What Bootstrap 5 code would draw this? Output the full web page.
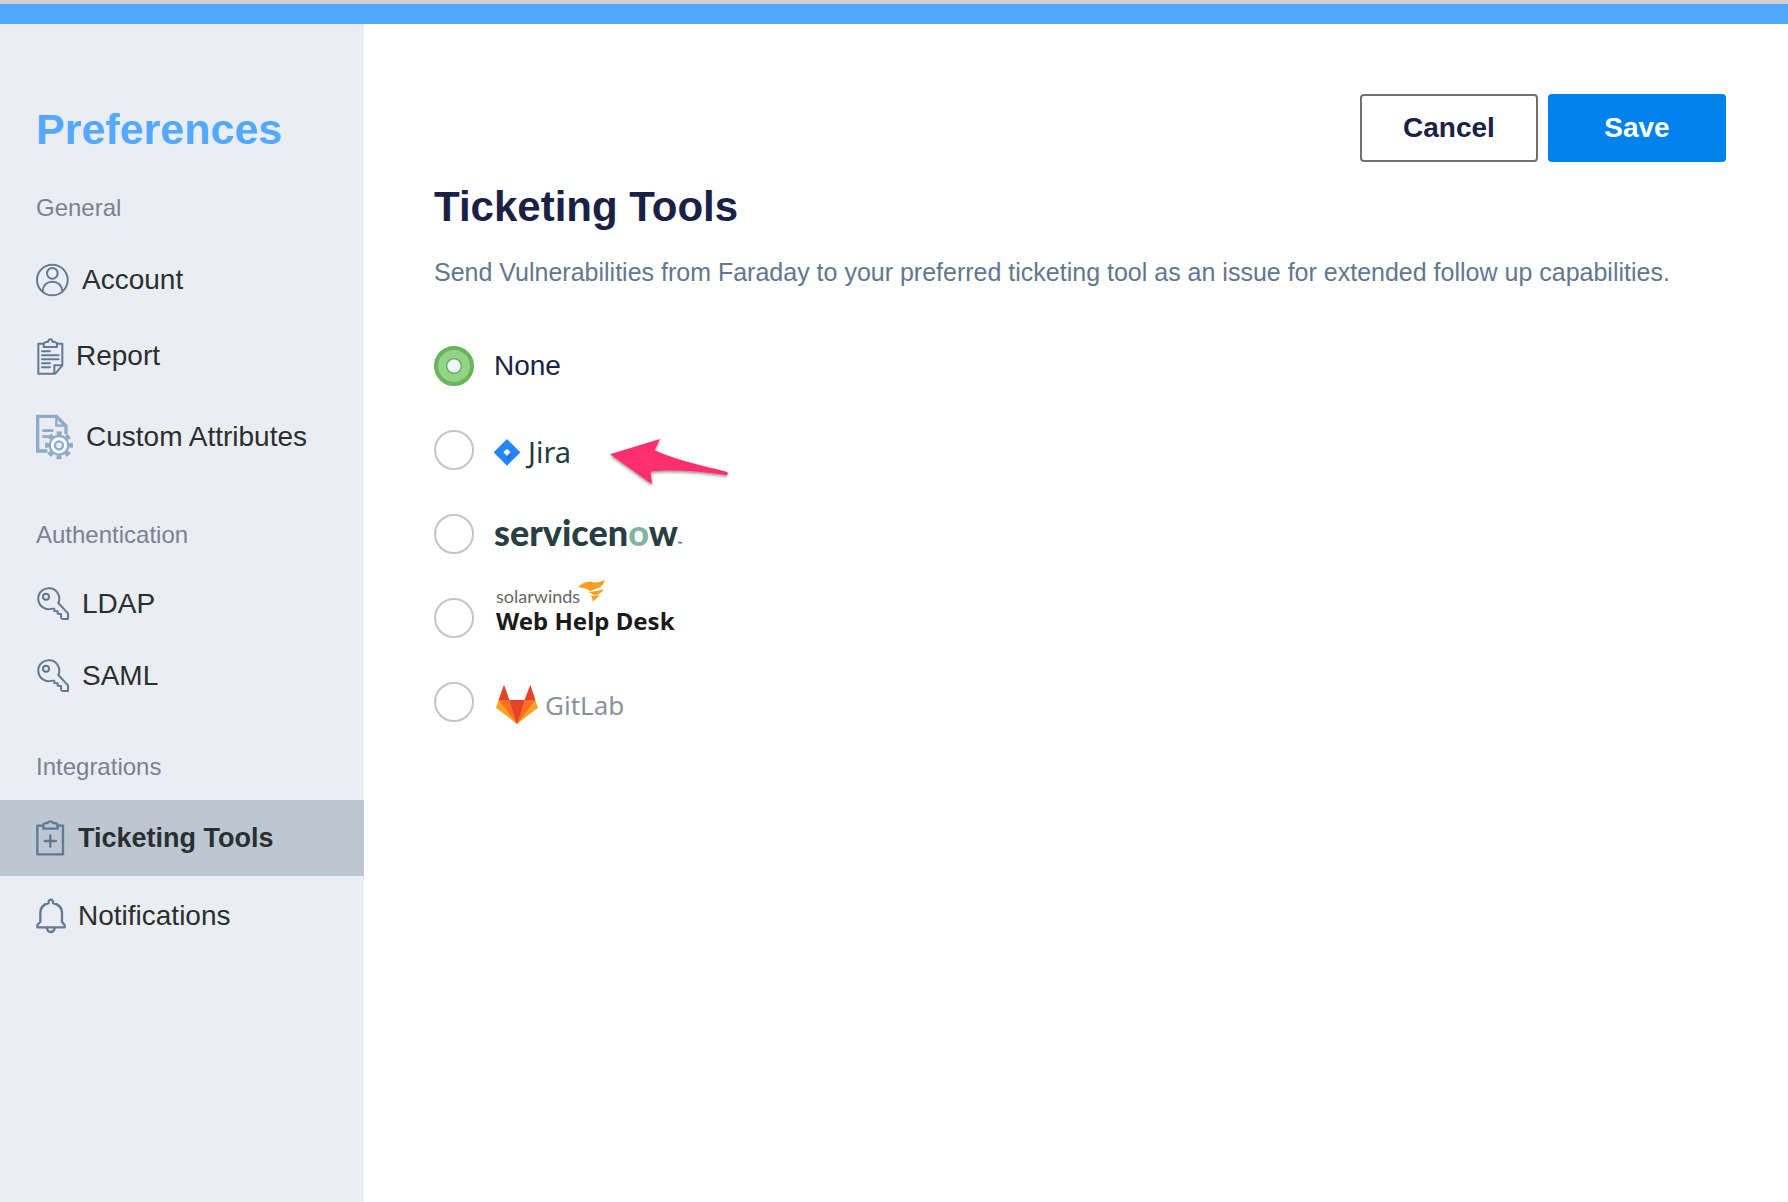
<!DOCTYPE html>
<html lang="en">
<head>
<meta charset="utf-8">
<meta name="viewport" content="width=device-width, initial-scale=1">
<title>Preferences - Ticketing Tools</title>
<link href="https://cdn.jsdelivr.net/npm/bootstrap@5.3.0/dist/css/bootstrap.min.css" rel="stylesheet">
<style>
  body { font-family: "Liberation Sans", Arial, sans-serif; color: #1b2145; background: #fff; }
  .window-edge { height: 4px; background: #d0d0d0; }
  .top-strip { height: 20px; background: #53a8ff; }
  .app-shell { min-height: calc(100vh - 24px); }

  .prefs-side { width: 364px; background: #eaeef3; padding-top: 79px; }
  .prefs-title { font-size: 43px; line-height: 52px; font-weight: 700; color: #53a8ff; padding-left: 36px; margin: 0 0 36px; }
  .side-label { font-size: 24px; line-height: 34px; font-weight: 400; color: #7d7f93; padding-left: 36px; margin: 38px 0 16px; }
  .side-label:first-child { margin: 0 0 17px; }
  .side-link { height: 76px; padding: 0 36px; gap: 12px; font-size: 28px; line-height: 36px; color: #2a2f31; border-radius: 0; white-space: nowrap; }
  .side-link:hover { color: #2a2f31; background: #dde3ea; }
  .side-link.active { background: #bdc7d1; color: #2a2f31; font-weight: 700; font-size: 27px; }
  .side-link svg { flex: none; }
  .row-tall { height: 86px; }
  .row-key { height: 72px; }
  .row-bell { height: 80px; }
  .ico { fill: none; stroke: #647995; stroke-width: 7; stroke-linejoin: round; stroke-linecap: round; }
  .ico-thin { stroke-width: 6; }

  .prefs-main { padding: 70px 62px 40px 70px; min-width: 0; }
  .action-btn { width: 178px; height: 68px; font-size: 28px; font-weight: 700; border-radius: 4px; border-width: 2px; padding: 0; }
  .action-set { gap: 10px; }
  .btn-cancel { border-color: #707070; color: #1b2145; background: #fff; }
  .btn-save, .btn-save:hover { border-color: #0082ee; background: #0082ee; color: #fff; }
  .page-title { font-size: 42px; line-height: 52px; font-weight: 700; margin: 19px 0 21px; }
  .page-note { font-size: 25px; line-height: 36px; color: #63768f; margin: 0 0 34px; }

  .tool-row { height: 84px; gap: 20px; }
  .tool-row .form-check-input { width: 40px; height: 40px; margin: 0; flex: none; border: 2px solid #c4c4c4; background-color: #fff; }
  .tool-row .form-check-input:checked { border: 4px solid #68b65c; background-color: #94d388;
    background-image: radial-gradient(circle, #eef6ff 6px, #68b65c 7px, #68b65c 8px, transparent 8px); background-size: 100% 100%; }
  .tool-name { font-size: 28px; line-height: 36px; cursor: pointer; }
  .brand-text { font-family: "Noto Sans", "Open Sans", sans-serif; line-height: 36px; }
  .brand-jira { font-size: 29px; color: #253a40; padding-top: 4px; }
  .brand-now { font-family: Lato, sans-serif; font-weight: 900; font-size: 36px; line-height: 40px; color: #293e40; padding-top: 8px; }
  .brand-now small { font-size: 6px; }
  .now-ring { color: #81b5a1; }
  .brand-whd { padding: 0 0 16px 2px; }
  .brand-solar { font-family: Lato, sans-serif; font-size: 18px; line-height: 22px; color: #666; }
  .brand-solar svg { margin: -5px 0 0 -2px; }
  .brand-desk { font-size: 24px; line-height: 28px; font-weight: 700; color: #1a1a1a; }
  .brand-gitlab { font-size: 26px; color: #8c929d; padding: 5px 0 0 2px; gap: 7px; }
  .pointer-arrow { position: absolute; left: 172px; top: 23px; }
</style>
</head>
<body>
<div class="window-edge"></div>
<header class="top-strip"></header>
<div class="app-shell d-flex">
  <aside class="prefs-side flex-shrink-0">
    <h1 class="prefs-title">Preferences</h1>
    <nav class="nav flex-column flex-nowrap" aria-label="Preferences">
      <h2 class="side-label">General</h2>
      <a class="nav-link side-link d-flex align-items-center" href="#account">
        <svg width="34" height="34" viewBox="108 789 102 102"><g class="ico ico-thin"><circle cx="157" cy="840" r="46"/><circle cx="157" cy="820" r="16"/><path d="M128 874C129 855 141 845 157 845S185 855 187 874"/></g></svg>
        Account</a>
      <a class="nav-link side-link d-flex align-items-center" href="#report">
        <svg width="28" height="37" viewBox="108 262 84 111"><g class="ico ico-thin"><path d="M131 279H115V369H166L187 344V279H171M187 344H163V369"/><path d="M131 289V278L137 274H144Q145 266 151 266T158 274H165L171 278V289Z"/><path d="M126 302H150M126 314H176M126 326H176M126 338H150M126 350H150"/></g></svg>
        Report</a>
      <a class="nav-link side-link row-tall d-flex align-items-center" href="#custom-attributes">
        <svg width="38" height="46" viewBox="108 490 114 138"><path d="M142 601H113V497H169L198 526V550" fill="none" stroke="#8fabc7" stroke-width="10"/><path d="M169 497V525H198" fill="none" stroke="#8fabc7" stroke-width="7"/><path d="M127 540H160M127 558H146" stroke="#8fabc7" stroke-width="8"/><circle cx="177" cy="584" r="36" fill="none" stroke="#8fabc7" stroke-width="12" stroke-dasharray="15.1 13.17" stroke-dashoffset="8"/><circle cx="177" cy="584" r="28" fill="#fff" stroke="#8fabc7" stroke-width="7"/><circle cx="177" cy="584" r="12" fill="#eaeef3" stroke="#8fabc7" stroke-width="7"/></svg>
        Custom Attributes</a>

      <h2 class="side-label">Authentication</h2>
      <a class="nav-link side-link row-key d-flex align-items-center" href="#ldap">
        <svg width="34" height="34" viewBox="108 261 102 102"><g class="ico ico-thin"><path d="M175 309A31.500 31.500 0 1 0 156 326L163 326V333L173 334V341L183 342V353L188 357H204V340Z"/><circle cx="138" cy="290" r="9"/></g></svg>
        LDAP</a>
      <a class="nav-link side-link row-key d-flex align-items-center" href="#saml">
        <svg width="34" height="34" viewBox="108 261 102 102"><g class="ico ico-thin"><path d="M175 309A31.500 31.500 0 1 0 156 326L163 326V333L173 334V341L183 342V353L188 357H204V340Z"/><circle cx="138" cy="290" r="9"/></g></svg>
        SAML</a>

      <h2 class="side-label">Integrations</h2>
      <a class="nav-link side-link active d-flex align-items-center" href="#ticketing" aria-current="page">
        <svg width="30" height="36" viewBox="108 241 90 108"><g class="ico"><path d="M130 258H112V344H189V258H172"/><path d="M130 267V254L137 250H143Q145 245 151 245T159 250H165L173 254V267Z"/><path d="M151 287V321M134 304H168"/></g></svg>
        Ticketing Tools</a>
      <a class="nav-link side-link row-bell d-flex align-items-center" href="#notifications">
        <svg width="30" height="36" viewBox="108 475 90 108"><g class="ico"><path d="M112 563V556L121 547V520C121 504 131 494 146 490V485Q147 480 152 480T159 485V490C175 494 186 504 186 520V547L194 556V563Z"/><path d="M141 565Q142 577 152 577T164 565"/></g></svg>
        Notifications</a>
    </nav>
  </aside>

  <main class="prefs-main flex-grow-1">
    <div class="action-set d-flex justify-content-end">
      <button type="button" class="btn action-btn btn-cancel">Cancel</button>
      <button type="button" class="btn action-btn btn-save">Save</button>
    </div>
    <h2 class="page-title">Ticketing Tools</h2>
    <p class="page-note">Send Vulnerabilities from Faraday to your preferred ticketing tool as an issue for extended follow up capabilities.</p>

    <form>
      <div class="tool-row d-flex align-items-center">
        <input class="form-check-input" type="radio" name="tool" id="tool-none" checked>
        <label class="tool-name" for="tool-none">None</label>
      </div>
      <div class="tool-row d-flex align-items-center position-relative">
        <input class="form-check-input" type="radio" name="tool" id="tool-jira">
        <label class="tool-name brand-text brand-jira d-flex align-items-center gap-2" for="tool-jira">
          <svg width="26" height="28" viewBox="0 0 78 84"><path d="M39 3L79 43L39 83L-1 43Z" fill="#2684ff"/><path d="M39 32L50 43L39 54L28 43Z" fill="#fff"/><path d="M39 54L50 43Q56 59 39 71Z" fill="#1b6ae0" opacity=".6"/></svg>
          Jira</label>
        <svg class="pointer-arrow" width="130" height="60" viewBox="-12 -12 390 180" aria-hidden="true">
          <defs><filter id="arrowShadow" x="-10%" y="-10%" width="120%" height="130%"><feDropShadow dx="0" dy="5" stdDeviation="4" flood-color="#000" flood-opacity=".45"/></filter></defs>
          <path d="M0 58L150 12L134 46C190 72 280 94 350 110Q355 112 353 117Q352 121 347 120C270 110 190 102 122 110L126 148Z" fill="#ff2f6c" filter="url(#arrowShadow)"/>
        </svg>
      </div>
      <div class="tool-row d-flex align-items-center">
        <input class="form-check-input" type="radio" name="tool" id="tool-servicenow">
        <label class="tool-name brand-now" for="tool-servicenow">servicen<span class="now-ring">o</span>w<small>™</small></label>
      </div>
      <div class="tool-row d-flex align-items-center">
        <input class="form-check-input" type="radio" name="tool" id="tool-webhelpdesk">
        <label class="tool-name brand-text brand-whd d-flex flex-column" for="tool-webhelpdesk">
          <span class="brand-solar d-flex align-items-start">solarwinds
            <svg width="28" height="24" viewBox="0 0 84 72"><path d="M0 22Q14 4 40 5Q54 12 80 0Q76 16 66 22Q50 28 36 34Q28 24 0 22Z" fill="#f99d1c"/><path d="M30 36Q52 36 78 28Q70 42 50 46Q42 40 30 36Z" fill="#f99d1c"/><path d="M38 48L66 46L43 66Q46 56 38 48Z" fill="#f99d1c"/></svg></span>
          <span class="brand-desk">Web Help Desk</span></label>
      </div>
      <div class="tool-row d-flex align-items-center">
        <input class="form-check-input" type="radio" name="tool" id="tool-gitlab">
        <label class="tool-name brand-text brand-gitlab d-flex align-items-center" for="tool-gitlab">
          <svg width="42" height="39" viewBox="0 0 126 117"><path d="M63 117L0 68L8 45L24 0L40 45H86L103 0L118 45L126 68Z" fill="#fca326"/><path d="M63 117L8 45H118Z" fill="#fc6d26"/><path d="M63 117L40 45H86ZM8 45L24 0L40 45ZM86 45L103 0L118 45Z" fill="#e24329"/></svg>
          GitLab</label>
      </div>
    </form>
  </main>
</div>
<script src="https://cdn.jsdelivr.net/npm/bootstrap@5.3.0/dist/js/bootstrap.bundle.min.js"></script>
</body>
</html>
